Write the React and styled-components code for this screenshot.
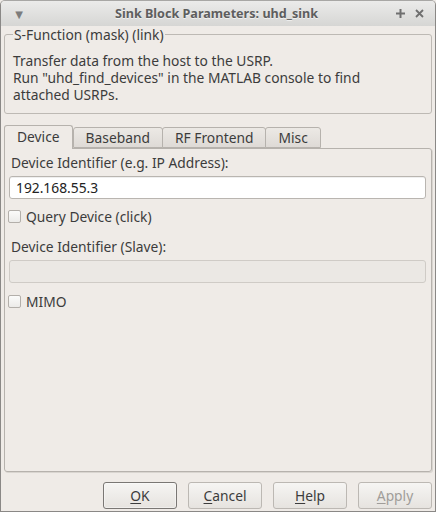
import React from "react";
import styled, { createGlobalStyle } from "styled-components";

const Global = createGlobalStyle`
  html, body { margin: 0; padding: 0; background: #efebe7; }
  body { font-family: "Noto Sans", "DejaVu Sans", sans-serif; font-size: 13.8px; color: #3c3c3c; }
  * { box-sizing: border-box; }
`;

const Window = styled.div`
  width: 436px;
  height: 512px;
  display: flex;
  flex-direction: column;
  background: #efebe7;
  border: 1px solid #8a8886;
  border-top-color: #a8a7a5;
  border-radius: 5px 5px 0 0;
  overflow: hidden;
`;

const TitleBar = styled.div`
  height: 25px;
  flex: none;
  display: flex;
  align-items: center;
  padding: 0 10px 0 11px;
  background: linear-gradient(#ebebea, #d6d6d4);
  color: #5e5e5e;
`;

const TitleIcon = styled.span`
  width: 14px;
  display: flex;
  justify-content: center;
  color: #7c7c7c;
  font-size: 10px;
`;

const TitleText = styled.div`
  flex: 1;
  text-align: center;
  font-weight: bold;
  font-size: 12.6px;
  padding-left: 12px;
  text-shadow: 0 1px 0 rgba(255,255,255,0.6);
`;

const TitleButtons = styled.div`
  display: flex;
  gap: 8px;
  align-items: center;
`;

const Body = styled.div`
  flex: 1;
  display: flex;
  flex-direction: column;
  padding: 0 3px;
`;

const GroupBox = styled.fieldset`
  margin: 0;
  padding: 9px 8px 6px 8px;
  border: 1px solid #bdb9b4;
  border-radius: 3px;
  height: 88px;
  min-width: 0;
`;

const Legend = styled.legend`
  padding: 0 1px;
  margin-left: 0;
  color: #3c3c3c;
  line-height: 17px;
`;

const Line = styled.div`
  height: 17px;
  line-height: 17px;
  white-space: nowrap;
  color: #3c3c3c;
`;

const TabArea = styled.div`
  margin-top: 11px;
  display: flex;
  flex-direction: column;
  flex: none;
`;

const TabBar = styled.div`
  display: flex;
  align-items: flex-end;
  height: 23px;
`;

const Tab = styled.div`
  height: ${p => (p.$active ? "24px" : "21px")};
  margin-bottom: ${p => (p.$active ? "-1px" : "0")};
  margin-right: ${p => (p.$active ? "0" : "-1px")};
  padding: 0 ${p => p.$pad}px;
  display: flex;
  align-items: center;
  justify-content: center;
  border: 1px solid #b6b2ad;
  border-bottom: ${p => (p.$active ? "none" : "1px solid #b6b2ad")};
  border-radius: 3px 3px 0 0;
  background: ${p => (p.$active ? "#efebe7" : "linear-gradient(#ece9e5, #dedad6)")};
  color: #3c3c3c;
  position: relative;
  z-index: ${p => (p.$active ? 1 : 0)};
  padding-bottom: ${p => (p.$active ? "2px" : "0")};
`;

const Pane = styled.div`
  height: 324px;
  border: 1px solid #b6b2ad;
  border-radius: 0 3px 3px 3px;
  padding: 5px 5px 0 4px;
  display: flex;
  flex-direction: column;
  box-shadow: 1px 1px 0 #d9d5d0;
`;

const FieldLabel = styled.div`
  line-height: 17px;
  padding-left: 2px;
  margin-top: ${p => p.$top || 0}px;
`;

const TextInput = styled.div`
  margin-top: 5px;
  height: 23px;
  border: 1px solid ${p => (p.$disabled ? "#cfcbc6" : "#b9b5b0")};
  border-radius: 3px;
  background: ${p => (p.$disabled ? "#ebe8e4" : "#ffffff")};
  padding: 0 6px;
  display: flex;
  align-items: center;
  color: #222;
  box-shadow: inset 0 1px 0 ${p => (p.$disabled ? "transparent" : "#efefef")};
`;

const CheckRow = styled.div`
  display: flex;
  align-items: center;
  gap: 5px;
  margin-top: ${p => p.$top}px;
  margin-left: -1px;
  height: 17px;
`;

const CheckBox = styled.span`
  width: 13px;
  height: 13px;
  border: 1px solid #b3afaa;
  border-radius: 2px;
  background: linear-gradient(#fbfbfa, #ecebe9);
  flex: none;
`;

const ButtonRow = styled.div`
  display: flex;
  justify-content: flex-end;
  gap: 11px;
  margin-top: 10px;
`;

const Button = styled.div`
  width: 74px;
  height: 27px;
  border: 1px solid ${p => (p.$default ? "#7a7774" : "#bcb8b3")};
  border-radius: 3px;
  background: linear-gradient(#f6f5f3, #e6e3df);
  display: flex;
  align-items: center;
  justify-content: center;
  color: ${p => (p.$disabled ? "#a09d99" : "#3c3c3c")};
  box-shadow: ${p => (p.$default ? "inset 0 0 0 1px rgba(255,255,255,0.4)" : "none")};
  u { text-decoration-thickness: 1px; text-underline-offset: 2px; }
`;

function Plus() {
  return (
    <svg width="11" height="11" viewBox="0 0 11 11">
      <path d="M5.5 1v9M1 5.5h9" stroke="#6f6f6f" strokeWidth="2" />
    </svg>
  );
}

function Cross() {
  return (
    <svg width="11" height="11" viewBox="0 0 11 11">
      <path d="M2 2l7 7M9 2l-7 7" stroke="#6f6f6f" strokeWidth="1.8" />
    </svg>
  );
}

export default function App() {
  return (
    <>
      <Global />
      <Window>
        <TitleBar>
          <TitleIcon>▼</TitleIcon>
          <TitleText>Sink Block Parameters: uhd_sink</TitleText>
          <TitleButtons>
            <Plus />
            <Cross />
          </TitleButtons>
        </TitleBar>
        <Body>
          <GroupBox>
            <Legend>S-Function (mask) (link)</Legend>
            <Line>Transfer data from the host to the USRP.</Line>
            <Line>Run "uhd_find_devices" in the MATLAB console to find</Line>
            <Line>attached USRPs.</Line>
          </GroupBox>
          <TabArea>
            <TabBar>
              <Tab $active $pad={12}>Device</Tab>
              <Tab $pad={12}>Baseband</Tab>
              <Tab $pad={12}>RF Frontend</Tab>
              <Tab $pad={12}>Misc</Tab>
            </TabBar>
            <Pane>
              <FieldLabel>Device Identifier (e.g. IP Address):</FieldLabel>
              <TextInput>192.168.55.3</TextInput>
              <CheckRow $top={9}>
                <CheckBox />
                <span>Query Device (click)</span>
              </CheckRow>
              <FieldLabel $top={13}>Device Identifier (Slave):</FieldLabel>
              <TextInput $disabled />
              <CheckRow $top={10}>
                <CheckBox />
                <span>MIMO</span>
              </CheckRow>
            </Pane>
          </TabArea>
          <ButtonRow>
            <Button $default><span><u>O</u>K</span></Button>
            <Button><span><u>C</u>ancel</span></Button>
            <Button><span><u>H</u>elp</span></Button>
            <Button $disabled><span><u>A</u>pply</span></Button>
          </ButtonRow>
        </Body>
      </Window>
    </>
  );
}
